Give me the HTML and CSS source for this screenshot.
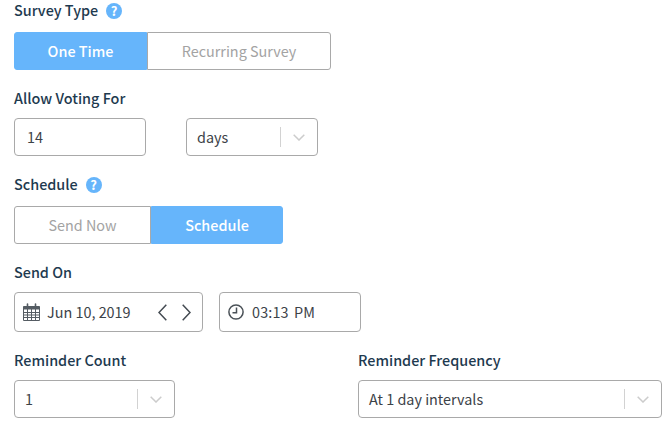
FILE: index.html
```html
<!DOCTYPE html>
<html lang="en">
<head>
    <meta charset="UTF-8">
    <title>Survey Settings</title>
    <link rel="stylesheet" href="styles.css">
</head>
<body>
    <div class="form">
        <div class="label-row label-row-help">
            <label class="field-label">Survey Type</label>
            <span class="help-icon">?</span>
        </div>
        <div class="toggle toggle-type">
            <button class="toggle-btn active btn-one-time">One Time</button>
            <button class="toggle-btn">Recurring Survey</button>
        </div>

        <div class="label-row">
            <label class="field-label">Allow Voting For</label>
        </div>
        <div class="field-row voting-row">
            <div class="box box-voting">14</div>
            <div class="box select select-days">
                <span class="select-value">days</span>
                <span class="select-sep"></span>
                <svg class="chevron" width="12" height="7" viewBox="0 0 12 7"><path d="M.7 .7L6 6l5.3-5.3" fill="none" stroke="#ccc" stroke-width="1.5"/></svg>
            </div>
        </div>

        <div class="label-row label-row-help">
            <label class="field-label">Schedule</label>
            <span class="help-icon">?</span>
        </div>
        <div class="toggle toggle-schedule">
            <button class="toggle-btn btn-send-now">Send Now</button>
            <button class="toggle-btn active">Schedule</button>
        </div>

        <div class="label-row">
            <label class="field-label">Send On</label>
        </div>
        <div class="field-row send-row">
            <div class="box box-date">
                <svg class="icon icon-calendar" width="17" height="18" viewBox="0 0 17 18">
                    <path d="M.5 3.5h16v14H.5z" fill="none" stroke="#555c63"/>
                    <path d="M.5 3.5h16v3H.5z" fill="#555c63"/>
                    <path d="M.5 9.5h16M.5 12h16M.5 14.5h16M4.5 6v11M8.5 6v11M12.5 6v11" stroke="#555c63"/>
                    <path d="M4.5 1v3M12.5 1v3" stroke="#555c63" stroke-width="1.6" stroke-linecap="round"/>
                </svg>
                <span class="date-value">Jun 10, 2019</span>
                <svg class="arrow arrow-prev" width="9" height="17" viewBox="0 0 9 17"><path d="M8.3 .7L1 8.5l7.3 7.8" fill="none" stroke="#444b52" stroke-width="1.5"/></svg>
                <svg class="arrow" width="9" height="17" viewBox="0 0 9 17"><path d="M.7 .7L8 8.5 .7 16.3" fill="none" stroke="#444b52" stroke-width="1.5"/></svg>
            </div>
            <div class="box box-time">
                <svg class="icon" width="16" height="16" viewBox="0 0 16 16">
                    <circle cx="8" cy="8" r="7.1" fill="none" stroke="#4a5157" stroke-width="1.5"/>
                    <path d="M8.5 3.5V8.8H4.5" fill="none" stroke="#4a5157" stroke-width="1.5"/>
                </svg>
                <span class="time-value">03:13 PM</span>
            </div>
        </div>

        <div class="reminder-row">
            <div class="reminder-col">
                <div class="label-row">
                    <label class="field-label">Reminder Count</label>
                </div>
                <div class="box select select-count">
                    <span class="select-value">1</span>
                    <span class="select-sep"></span>
                    <svg class="chevron" width="12" height="7" viewBox="0 0 12 7"><path d="M.7 .7L6 6l5.3-5.3" fill="none" stroke="#ccc" stroke-width="1.5"/></svg>
                </div>
            </div>
            <div class="reminder-col">
                <div class="label-row">
                    <label class="field-label">Reminder Frequency</label>
                </div>
                <div class="box select select-frequency">
                    <span class="select-value">At 1 day intervals</span>
                    <span class="select-sep"></span>
                    <svg class="chevron" width="12" height="7" viewBox="0 0 12 7"><path d="M.7 .7L6 6l5.3-5.3" fill="none" stroke="#ccc" stroke-width="1.5"/></svg>
                </div>
            </div>
        </div>
    </div>
</body>
</html>
```

FILE: styles.css
```css
:root {
    --label-color: #1e3a4f;
    --text-color: #3c4248;
    --muted-color: #a3a3a3;
    --accent-color: #66b5fb;
    --border-color: #a9a9a9;
}

body {
    font-family: "Noto Sans CJK SC", "Noto Sans", sans-serif;
    font-size: 14.4px;
    margin: 0;
    background-color: #fff;
    color: var(--text-color);
}

.form {
    padding: 1px 8px 0 14px;
}

.label-row {
    display: flex;
    align-items: center;
    height: 20px;
    margin-bottom: 9px;
}

.label-row-help {
    margin-bottom: 11px;
}

.field-label {
    margin-top: -2px;
    font-size: 14.4px;
    font-weight: 500;
    line-height: 20px;
    color: var(--label-color);
}

.help-icon {
    width: 16px;
    height: 16px;
    margin-left: 8px;
    border-radius: 50%;
    background-color: var(--accent-color);
    color: #fff;
    font-size: 13px;
    font-weight: 700;
    line-height: 16px;
    text-align: center;
}

.toggle {
    display: flex;
    height: 38px;
    margin-bottom: 19px;
}

.toggle-type {
    width: 317px;
}

.toggle-schedule {
    width: 269px;
}

.toggle-btn {
    flex: 1;
    padding: 0;
    font-family: inherit;
    font-size: 14.4px;
    line-height: 20px;
    background-color: #fff;
    color: var(--muted-color);
    border: 1px solid var(--border-color);
}

.toggle-btn:first-child {
    border-radius: 3px 0 0 3px;
}

.toggle-btn:last-child {
    border-radius: 0 3px 3px 0;
}

.toggle-btn.active {
    background-color: var(--accent-color);
    border-color: var(--accent-color);
    color: #fff;
    font-weight: 500;
}

.btn-one-time {
    flex: 0 0 133px;
}

.btn-send-now {
    flex: 0 0 137px;
}

.field-row {
    display: flex;
}

.voting-row {
    gap: 40px;
    margin-bottom: 19px;
}

.send-row {
    gap: 16px;
    margin-bottom: 19px;
}

.box {
    display: flex;
    align-items: center;
    box-sizing: border-box;
    height: 38px;
    padding: 0 10px;
    line-height: 20px;
    background-color: #fff;
    border: 1px solid var(--border-color);
    border-radius: 4px;
}

.box-voting {
    width: 132px;
    padding-left: 12px;
}

.select {
    padding-right: 12px;
}

.select-value {
    flex: 1;
}

.select-sep {
    width: 1px;
    height: 20px;
    margin-right: 12px;
    background-color: #d2d2d2;
}

.select-days {
    width: 132px;
}

.select-count {
    width: 161px;
}

.select-frequency {
    width: 304px;
}

.box-date {
    width: 189px;
    height: 40px;
    padding: 0 11px 0 8px;
}

.box-time {
    width: 142px;
    height: 40px;
    padding: 0 8px;
}

.icon {
    flex-shrink: 0;
    margin-right: 8px;
}

.icon-calendar {
    margin-right: 7px;
}

.date-value {
    flex: 1;
}

.time-value {
    letter-spacing: 0.15px;
    word-spacing: 2px;
}

.arrow-prev {
    margin-right: 15px;
}

.reminder-row {
    display: flex;
    gap: 183px;
}
```
